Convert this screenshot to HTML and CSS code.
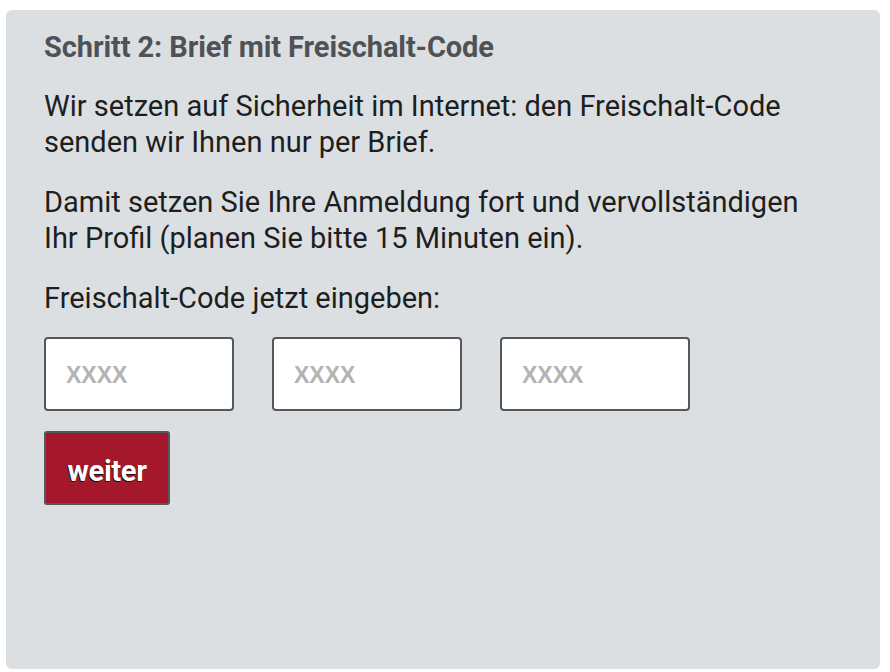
FILE: index.html
```html
<!DOCTYPE html>
<html lang="de">

<head>
    <meta charset="UTF-8">
    <meta name="viewport" content="width=device-width, initial-scale=1.0">
    <title>Freischalt-Code</title>
    <link rel="stylesheet" href="styles.css">
</head>

<body>
    <div class="step-panel">
        <h2 class="step-title">Schritt 2: Brief mit Freischalt-Code</h2>

        <p>Wir setzen auf Sicherheit im Internet: den Freischalt-Code<br>senden wir Ihnen nur per Brief.</p>
        <p>Damit setzen Sie Ihre Anmeldung fort und vervollständigen<br>Ihr Profil (planen Sie bitte 15 Minuten ein).</p>
        <p class="code-label">Freischalt-Code jetzt eingeben:</p>

        <div class="code-fields">
            <input type="text" class="code-input" placeholder="XXXX" maxlength="4">
            <input type="text" class="code-input" placeholder="XXXX" maxlength="4">
            <input type="text" class="code-input" placeholder="XXXX" maxlength="4">
        </div>

        <button class="next-button">weiter</button>
    </div>
</body>

</html>
```

FILE: styles.css
```css
* {
    margin: 0;
    padding: 0;
    box-sizing: border-box;
}

body {
    background: #fff;
    font-family: Roboto, 'Liberation Sans', sans-serif;
    color: #1d1e20;
}

.step-panel {
    background-color: #dcdfe2;
    border-radius: 6px;
    margin: 10px 10px 0 6px;
    height: 659px;
    padding: 21px 38px;
}

.step-title {
    font-family: Roboto, 'Liberation Sans', sans-serif;
    font-size: 29px;
    font-weight: bold;
    color: #4e5257;
    line-height: 32px;
    letter-spacing: -0.1px;
    margin-bottom: 25px;
}

.step-panel p {
    font-size: 29px;
    line-height: 36px;
    margin-bottom: 24px;
}

.step-panel .code-label {
    margin-bottom: 21px;
}

.code-fields {
    display: flex;
    gap: 38px;
    margin-bottom: 20px;
}

.code-input {
    width: 190px;
    height: 74px;
    border: 2px solid #54585d;
    border-radius: 4px;
    background: #fff;
    padding: 2px 20px 0;
    font-family: 'Liberation Sans', Arial, sans-serif;
    font-size: 23px;
    font-weight: bold;
    color: #333;
}

.code-input::placeholder {
    color: #b3b3b3;
}

.next-button {
    width: 126px;
    height: 74px;
    background-color: #a5182c;
    border: 2px solid #54585d;
    border-radius: 3px;
    padding-top: 6px;
    color: #fff;
    font-family: Roboto, 'Liberation Sans', sans-serif;
    font-size: 29px;
    font-weight: bold;
    letter-spacing: -0.3px;
    text-shadow: -1px 1px 0 #111;
    cursor: pointer;
}
```
